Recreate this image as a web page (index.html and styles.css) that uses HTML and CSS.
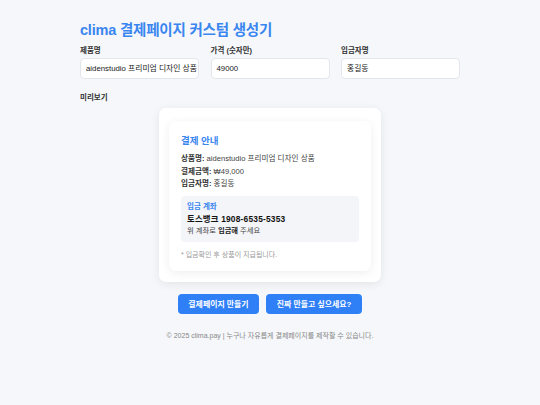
FILE: index.html
```html
<!DOCTYPE html>
<html lang="ko">
<head>
<meta charset="utf-8">
<link rel="stylesheet" href="styles.css">
</head>
<body>
<main class="wrap">
  <h1 class="title">clima 결제페이지 커스텀 생성기</h1>
  <div class="fields">
    <label class="field"><span class="label">제품명</span><span class="input">aidenstudio 프리미엄 디자인 상품</span></label>
    <label class="field"><span class="label">가격 (숫자만)</span><span class="input">49000</span></label>
    <label class="field"><span class="label">입금자명</span><span class="input">홍길동</span></label>
  </div>
  <div class="section-label">미리보기</div>
  <div class="preview">
    <div class="card">
      <h2 class="card-title">결제 안내</h2>
      <p class="row"><b>상품명:</b> aidenstudio 프리미엄 디자인 상품</p>
      <p class="row"><b>결제금액:</b> ₩49,000</p>
      <p class="row"><b>입금자명:</b> 홍길동</p>
      <div class="account">
        <div class="acc-label">입금 계좌</div>
        <div class="acc-num">토스뱅크 1908-6535-5353</div>
        <div class="acc-note">위 계좌로 <b>입금해</b> 주세요</div>
      </div>
      <p class="note">* 입금확인 후 상품이 지급됩니다.</p>
    </div>
  </div>
  <div class="buttons">
    <button class="btn btn-a">결제페이지 만들기</button>
    <button class="btn btn-b">진짜 만들고 싶으세요?</button>
  </div>
  <footer class="footer">© 2025 clima.pay | 누구나 자유롭게 결제페이지를 제작할 수 있습니다.</footer>
</main>
</body>
</html>
```

FILE: styles.css
```css
* { box-sizing: border-box; margin: 0; padding: 0; }
body {
  background: #f5f7fa;
  font-family: "Liberation Sans", "Noto Sans CJK KR", sans-serif;
  color: #222;
}
.wrap { width: 380px; margin: 0 auto; padding-top: 20px; }
.title {
  font-size: 14.5px;
  font-weight: 700;
  color: #3a86f0;
  line-height: 20px;
  letter-spacing: -0.2px;
}
.fields {
  display: grid;
  grid-template-columns: 119px 119px 119px;
  column-gap: 11.5px;
  margin-top: 5px;
}
.field { display: flex; flex-direction: column; }
.label {
  font-size: 7.5px;
  font-weight: 700;
  color: #333;
  line-height: 12px;
  margin-bottom: 1px;
}
.input {
  display: block;
  height: 21px;
  background: #fff;
  border: 1px solid #e3e6eb;
  border-radius: 4px;
  font-size: 7.8px;
  line-height: 19px;
  padding: 0 5px;
  color: #222;
  white-space: nowrap;
  overflow: hidden;
}
.section-label {
  font-size: 7.5px;
  font-weight: 700;
  color: #333;
  line-height: 12px;
  margin-top: 13px;
}
.preview {
  width: 222px;
  margin: 4px auto 0;
  background: #fff;
  border-radius: 7px;
  box-shadow: 0 2px 10px rgba(0,0,0,0.08);
  padding: 13px 10px 11px;
}
.card {
  background: #fff;
  border-radius: 7px;
  box-shadow: 0 2px 10px rgba(0,0,0,0.07);
  padding: 13px 12px 11px;
}
.card-title {
  font-size: 9.5px;
  font-weight: 700;
  color: #3a86f0;
  line-height: 14px;
  margin-bottom: 5px;
}
.row {
  font-size: 7.6px;
  line-height: 12.5px;
  color: #444;
}
.row b { color: #333; }
.account {
  background: #f4f5f8;
  border-radius: 4px;
  padding: 5px 6px 5px;
  margin-top: 5px;
}
.acc-label {
  font-size: 7.5px;
  font-weight: 700;
  color: #3a86f0;
  line-height: 12px;
}
.acc-num {
  font-size: 8.4px;
  font-weight: 700;
  color: #111;
  line-height: 12px;
  letter-spacing: 0.2px;
}
.acc-note {
  font-size: 7.3px;
  color: #444;
  line-height: 12px;
}
.acc-note b { color: #222; }
.note {
  font-size: 7px;
  color: #999;
  line-height: 10px;
  margin-top: 8px;
}
.buttons {
  display: flex;
  justify-content: center;
  gap: 7px;
  margin-top: 12px;
}
.btn {
  border: none;
  background: #2f80f7;
  color: #fff;
  font-family: inherit;
  font-size: 7.9px;
  font-weight: 700;
  height: 20px;
  border-radius: 4px;
}
.btn-a { width: 81px; }
.btn-b { width: 96px; }
.footer {
  text-align: center;
  font-size: 7px;
  color: #888;
  margin-top: 17px;
  line-height: 10px;
}
```
